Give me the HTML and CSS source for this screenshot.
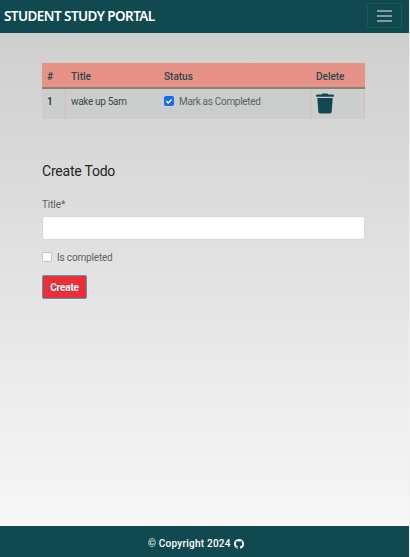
FILE: index.html
```html
<!DOCTYPE html>
<html lang="en">
<head>
<meta charset="utf-8">
<title>Student Study Portal</title>
<link rel="stylesheet" href="styles.css">
</head>
<body>
<header class="navbar">
  <a class="brand">STUDENT STUDY PORTAL</a>
  <button class="toggler" aria-label="Menu"><span></span><span></span><span></span></button>
</header>
<main>
  <table class="todos">
    <colgroup><col class="c-num"><col class="c-title"><col class="c-status"><col class="c-del"></colgroup>
    <thead><tr><th>#</th><th>Title</th><th>Status</th><th>Delete</th></tr></thead>
    <tbody><tr>
      <td class="num">1</td>
      <td class="name">wake up 5am</td>
      <td class="status"><div class="check-row"><span class="box checked"><svg viewBox="0 0 10 10" width="10" height="10"><path d="M2.3 5.1 4.2 7 7.7 3.4" fill="none" stroke="#fff" stroke-width="1.5"/></svg></span><span class="mark">Mark as Completed</span></div></td>
      <td class="del"><svg class="trash" viewBox="0 0 18 21" width="18" height="21"><path fill="#104a50" d="M.7 1.6h4.8L6.6.4h4.8l1.1 1.2h4.8q.6 0 .6.6v1.6H.1V2.2q0-.6.6-.6zM1.3 5.1h15.4l-1 13.7q-.1 1.8-1.8 1.8H4.1q-1.7 0-1.8-1.8z"/></svg></td>
    </tr></tbody>
  </table>
  <h2>Create Todo</h2>
  <form>
    <label class="label" for="title">Title*</label>
    <input class="field" id="title" type="text">
    <div class="check-row complete"><span class="box"></span><span class="is">Is completed</span></div>
    <button class="create" type="button">Create</button>
  </form>
</main>
<footer><span>© Copyright 2024</span><svg viewBox="0 0 16 16" width="10" height="10"><path fill="#fff" d="M8 0C3.58 0 0 3.58 0 8c0 3.54 2.29 6.53 5.47 7.59.4.07.55-.17.55-.38v-1.49c-2.01.37-2.53-.49-2.69-.94-.09-.23-.48-.94-.82-1.13-.28-.15-.68-.52-.01-.53.63-.01 1.08.58 1.23.82.72 1.21 1.87.87 2.33.66.07-.52.28-.87.51-1.07-1.78-.2-3.64-.89-3.64-3.95 0-.87.31-1.59.82-2.15-.08-.2-.36-1.02.08-2.12 0 0 .67-.21 2.2.82a7.5 7.5 0 0 1 4 0c1.53-1.04 2.2-.82 2.2-.82.44 1.1.16 1.92.08 2.12.51.56.82 1.27.82 2.15 0 3.07-1.87 3.75-3.65 3.95.29.25.54.73.54 1.48v2.2c0 .21.15.46.55.38A8 8 0 0 0 16 8c0-4.42-3.58-8-8-8z"/></svg></footer>
</body>
</html>
```
FILE: styles.css
```css
* { box-sizing: border-box; }
html { background: #f1f1f1; }
body {
  margin: 0;
  width: 409px;
  height: 557px;
  overflow: hidden;
  display: flex;
  flex-direction: column;
  font: 10px/15px Roboto, sans-serif;
  color: #5b6265;
  background: linear-gradient(#cccccc, #fafafa);
}
.navbar {
  height: 33px;
  flex: none;
  padding: 0 7px 0 4px;
  display: flex;
  align-items: center;
  justify-content: space-between;
  background: #104a50;
}
.brand {
  padding-bottom: 2px;
  font: 600 13.5px/20px "Noto Sans", "Open Sans", sans-serif;
  letter-spacing: -0.56px;
  color: #fff;
  white-space: nowrap;
}
.toggler {
  width: 35px;
  height: 25px;
  margin: 0 0 2px;
  padding: 0;
  display: flex;
  flex-direction: column;
  align-items: center;
  justify-content: center;
  gap: 3px;
  border: 1px solid #20575c;
  border-radius: 3px;
  background: none;
}
.toggler span { width: 15px; height: 2px; background: #7f9d9f; }
main { flex: 1; padding: 30px 44px 0 42px; }
.todos {
  width: 323px;
  table-layout: fixed;
  border-collapse: separate;
  border-spacing: 0;
}
.c-num { width: 24px; }
.c-title { width: 93px; }
.c-status { width: 152px; }
.c-del { width: 54px; }
th, td { padding: 0 5px; text-align: left; white-space: nowrap; }
th {
  height: 26px;
  padding-top: 3px;
  background: #e69287;
  border-bottom: 2px solid #8a7f7d;
  font-weight: 500;
  letter-spacing: 0;
  color: #29484d;
}
td { height: 30px; background: #cbcecd; vertical-align: top; padding-top: 5px; }
td.num { font-weight: 500; color: #212529; border-right: 1px solid #dbb9b7; }
td.name { color: #3f4649; letter-spacing: -0.32px; }
td.status, td.del { border-right: 1px solid #dbb9b7; }
td.del { padding-top: 4px; }
.trash { display: block; }
.check-row { display: flex; align-items: center; gap: 5px; }
.box {
  width: 10px;
  height: 10px;
  flex: none;
  display: flex;
  border: 1px solid #c1c5c8;
  border-radius: 2px;
  background: #fff;
}
.box.checked { border: 0; background: #0d6efd; margin-top: -1px; }
.mark { letter-spacing: -0.3px; }
.is { padding-top: 1px; letter-spacing: -0.17px; }
h2 {
  margin: 42px 0 0;
  height: 20px;
  border-bottom: 1px solid #dedede;
  font-size: 14px;
  line-height: 20px;
  font-weight: 400;
  letter-spacing: -0.22px;
  color: #212529;
}
form { display: flex; flex-direction: column; align-items: flex-start; }
.label { margin-top: 16px; letter-spacing: -0.1px; }
.field {
  width: 323px;
  height: 24px;
  margin: 4px 0 0;
  padding: 0 8px;
  border: 1px solid #d4d8dc;
  border-radius: 3px;
  background: #fff;
}
.complete { margin-top: 9px; }
.create {
  width: 45px;
  height: 24px;
  margin: 10px 0 0;
  padding: 1px 0 0;
  border: 1px solid #4b9bb5;
  border-radius: 2px;
  background: #ea2f38;
  font: 700 10px/21px Roboto, sans-serif;
  letter-spacing: -0.15px;
  color: #fff;
}
footer {
  height: 31px;
  flex: none;
  padding: 4px 0 0 148px;
  display: flex;
  align-items: center;
  gap: 3px;
  background: #104a50;
  color: #fff;
  font-weight: 500;
  letter-spacing: 0.24px;
}
```
